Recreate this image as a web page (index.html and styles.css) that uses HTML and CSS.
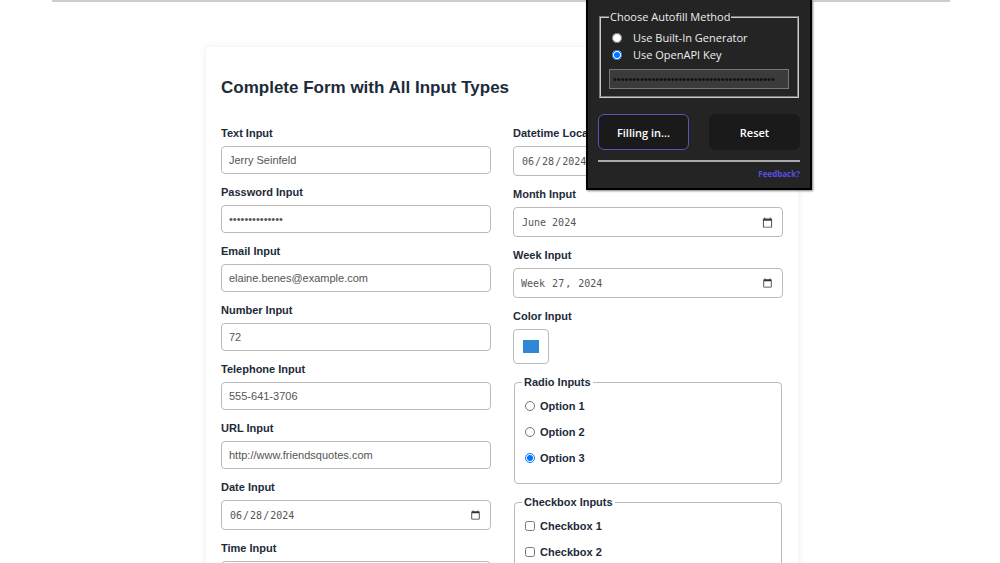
FILE: index.html
```html
<!DOCTYPE html>
<html lang="en">
<head>
  <meta charset="UTF-8" />
  <meta name="viewport" content="width=device-width, initial-scale=1.0"/>
  <title>Complete Form</title>
  <link rel="stylesheet" href="styles.css">
</head>
<body>

  <div class="page">
    <form class="card">
      <h1>Complete Form with All Input Types</h1>

      <div class="columns">
        <div class="column">
          <label for="text">Text Input</label>
          <input type="text" id="text" value="Jerry Seinfeld" />

          <label for="password">Password Input</label>
          <input type="password" id="password" value="serenity-now-1" />

          <label for="email">Email Input</label>
          <input type="email" id="email" value="elaine.benes@example.com" />

          <label for="number">Number Input</label>
          <input type="number" id="number" value="72" />

          <label for="tel">Telephone Input</label>
          <input type="tel" id="tel" value="555-641-3706" />

          <label for="url">URL Input</label>
          <input type="url" id="url" value="http://www.friendsquotes.com" />

          <label for="date">Date Input</label>
          <input type="date" id="date" class="picker" value="2024-06-28" />

          <label for="time">Time Input</label>
          <input type="time" id="time" class="picker" />
        </div>

        <div class="column">
          <label for="datetime">Datetime Local Input</label>
          <input type="datetime-local" id="datetime" class="picker" value="2024-06-28T12:00" />

          <!-- text field, so the month name shows in every browser -->
          <label for="month">Month Input</label>
          <div class="picker month">
            <input type="text" id="month" value="June 2024" />
            <svg width="11" height="11" viewBox="0 0 24 24" fill="#101010">
              <path d="M20 3h-1V1h-2v2H7V1H5v2H4c-1.100 0-2 .9-2 2v16c0 1.100.9 2 2 2h16c1.100 0 2-.9 2-2V5c0-1.100-.9-2-2-2zm0 18H4V8h16v13z"/>
            </svg>
          </div>

          <label for="week">Week Input</label>
          <input type="week" id="week" class="picker" value="2024-W27" />

          <label for="color">Color Input</label>
          <input type="color" id="color" value="#3088d4" />

          <fieldset class="group">
            <legend>Radio Inputs</legend>
            <label><input type="radio" name="option" /> Option 1</label>
            <label><input type="radio" name="option" /> Option 2</label>
            <label><input type="radio" name="option" checked /> Option 3</label>
          </fieldset>

          <fieldset class="group">
            <legend>Checkbox Inputs</legend>
            <label><input type="checkbox" /> Checkbox 1</label>
            <label><input type="checkbox" /> Checkbox 2</label>
          </fieldset>
        </div>
      </div>
    </form>

    <!-- extension popup -->
    <form class="popup">
      <fieldset class="method">
        <legend>Choose Autofill Method</legend>
        <label><input type="radio" name="method" /> Use Built-In Generator</label>
        <label><input type="radio" name="method" checked /> Use OpenAPI Key</label>
        <input type="password" class="key" aria-label="API key" value="key-00000000000000000000000000000000000000" />
      </fieldset>
      <div class="buttons">
        <button type="button" class="active">Filling in...</button>
        <button type="button">Reset</button>
      </div>
      <hr />
      <a href="#">Feedback?</a>
    </form>
  </div>

</body>
</html>
```
FILE: styles.css
```css
* {
  box-sizing: border-box;
}

body {
  margin: 0;
  height: 100vh;
  overflow: hidden;
  background-color: #fff;
  color: #1c2b3a;
  font-family: "Liberation Sans", Arial, sans-serif;
  font-size: 11px;
}

.page {
  position: relative;
  margin: 0 50px 0 52px;
  padding-left: 2px;
  border-top: 2px solid #ccc;
}

.card {
  max-width: 592px;
  margin: 45px auto 0;
  padding: 30px 15px;
  border-radius: 4px;
  box-shadow: 0 0 8px rgba(0, 0, 0, 0.08);
}

h1 {
  margin: 0 0 26px;
  font-size: 17px;
  line-height: 22px;
}

.columns {
  display: grid;
  grid-template-columns: 1fr 1fr;
  gap: 22px;
}

.column > label {
  display: block;
  margin-bottom: 5px;
  font-weight: bold;
  line-height: 16px;
}

.column > input,
.month {
  display: block;
  width: 100%;
  height: 28px;
  margin: 0 0 10px;
  padding: 0 7px;
  border: 1px solid #bbb;
  border-radius: 4px;
  background-color: #fff;
  color: #555;
  font-family: inherit;
  font-size: 11px;
}

.column > .picker {
  height: 30px;
  font-family: "DejaVu Sans Mono", monospace;
  font-size: 10px;
}

.picker::-webkit-calendar-picker-indicator {
  width: 11px;
  height: 11px;
  opacity: 0.8;
}

.month {
  display: flex;
  align-items: center;
}

.month input {
  flex: 1;
  min-width: 0;
  padding: 0 1px;
  border: none;
  background: none;
  color: inherit;
  font: inherit;
}

.month svg {
  margin-right: 2px;
  opacity: 0.8;
}

.column > input[type="color"] {
  width: 36px;
  height: 35px;
  padding: 10px 9px;
}

input::-webkit-color-swatch-wrapper {
  padding: 0;
}

input::-webkit-color-swatch {
  border: none;
}

.group {
  margin: 0 1px 10px;
  padding: 3px 10px 12px;
  border: 1px solid #bbb;
  border-radius: 4px;
}

.group legend {
  margin-left: -3px;
  padding: 0 2px;
  font-weight: bold;
  line-height: 16px;
}

.group label {
  display: flex;
  align-items: center;
  gap: 5px;
  height: 26px;
  font-weight: bold;
}

.group input {
  width: 10px;
  height: 10px;
  margin: 0;
}

.popup {
  position: absolute;
  top: -2px;
  right: 138px;
  width: 226px;
  padding: 9px 10px 8px;
  border: 2px solid #000;
  border-top: none;
  background-color: #242424;
  box-shadow: 1px 1px 2px rgba(0, 0, 0, 0.5);
  color: #eee;
  font-family: "Open Sans", sans-serif;
}

.method {
  margin: 0 1px 16px;
  padding: 4px 8px 7px;
  border: 2px groove #ccc;
}

.method legend {
  padding: 0 1px;
  line-height: 16px;
}

.method label {
  display: flex;
  align-items: center;
  gap: 11px;
  height: 17px;
}

.method input[type="radio"] {
  width: 10px;
  height: 10px;
  margin: 0 0 0 3px;
}

.key {
  display: block;
  width: 100%;
  height: 20px;
  margin-top: 6px;
  padding: 0 3px;
  border: 1px solid #777;
  background-color: #3b3b3b;
  color: #111;
  font-family: "Liberation Sans", Arial, sans-serif;
  font-size: 11px;
}

.buttons {
  display: grid;
  grid-template-columns: 1fr 1fr;
  gap: 20px;
}

button {
  height: 36px;
  border: 1px solid #1a1a1a;
  border-radius: 6px;
  background-color: #1a1a1a;
  color: #fff;
  font-family: inherit;
  font-size: 11px;
  font-weight: 600;
}

button.active {
  border-color: #5357b5;
}

hr {
  height: 2px;
  margin: 10px 0 6px;
  border: none;
  background-color: #aaa;
}

.popup a {
  display: block;
  color: #5450e0;
  font-size: 8px;
  font-weight: bold;
  line-height: 12px;
  text-align: right;
  text-decoration: none;
}
```
